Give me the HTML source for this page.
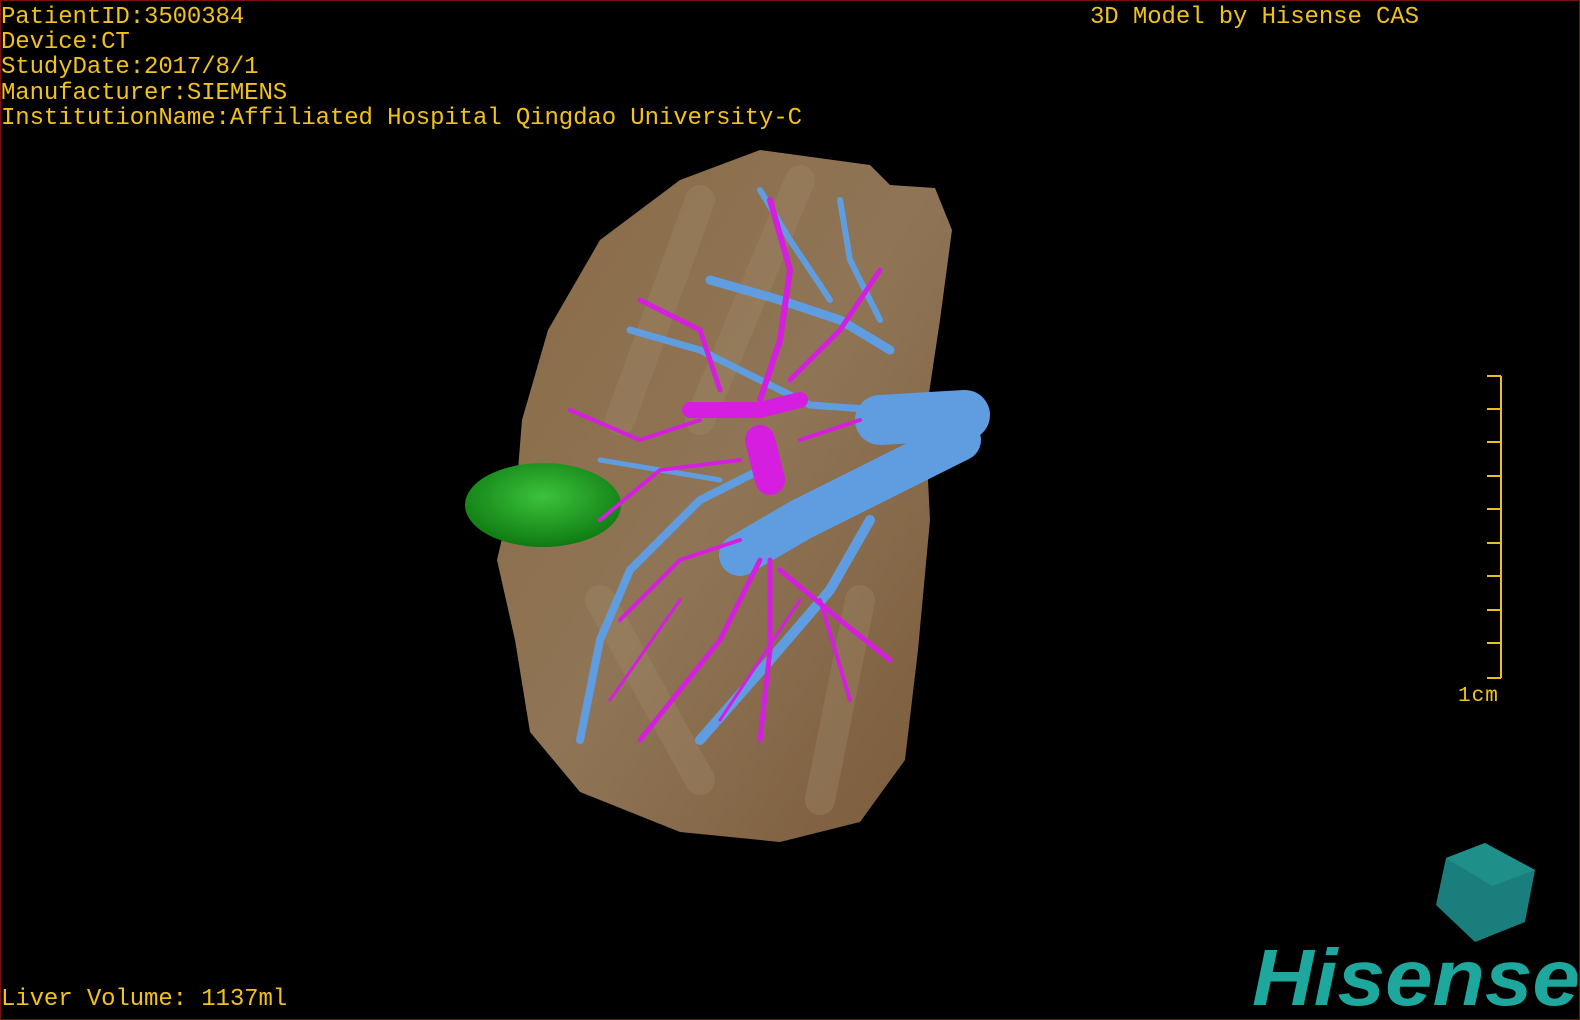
<!DOCTYPE html>
<html><head><meta charset="utf-8"><style>
html,body{margin:0;padding:0;background:#000;}
body{width:1580px;height:1020px;position:relative;overflow:hidden;}
.frame{position:absolute;left:0;top:0;width:1578px;height:1018px;border:1px solid #7a1010;}
.t{position:absolute;color:#f2c21a;font-family:"Liberation Mono","DejaVu Sans Mono",monospace;font-size:24px;line-height:25.2px;white-space:pre;letter-spacing:-0.1px;}
svg{position:absolute;left:0;top:0;}
</style></head><body>
<svg width="1580" height="1020" viewBox="0 0 1580 1020">
<defs>
<linearGradient id="lv" x1="0" y1="0" x2="1" y2="1">
<stop offset="0" stop-color="#8a6a45"/><stop offset="0.5" stop-color="#8f7556"/><stop offset="1" stop-color="#7a5a3a"/>
</linearGradient>
<radialGradient id="gr" cx="0.5" cy="0.4" r="0.6"><stop offset="0" stop-color="#3cc33c"/><stop offset="1" stop-color="#0f7a12"/></radialGradient>
</defs>
<path d="M760,150 L870,165 L890,185 L935,188 L952,230 L940,320 L925,420 L930,520 L918,650 L905,760 L860,822 L780,842 L680,832 L580,792 L530,732 L515,640 L497,560 L518,470 L522,420 L548,330 L600,240 L680,180 Z" fill="url(#lv)"/>
<g stroke="#a08a6a" stroke-width="30" opacity="0.35" fill="none" stroke-linecap="round">
<path d="M700,200 L620,420"/><path d="M800,180 L700,420"/><path d="M600,600 L700,780"/><path d="M860,600 L820,800"/>
</g>
<ellipse cx="543" cy="505" rx="78" ry="42" fill="url(#gr)"/>
<g stroke="#5f9de0" fill="none" stroke-linecap="round">
<path d="M580,740 L600,640 L630,570 L700,500 L760,470" stroke-width="8"/>
<path d="M700,740 L770,660 L830,590 L870,520" stroke-width="10"/>
<path d="M710,280 L780,300 L840,320 L890,350" stroke-width="9"/>
<path d="M760,190 L790,240 L830,300" stroke-width="6"/>
<path d="M840,200 L850,260 L880,320" stroke-width="6"/>
<path d="M630,330 L700,350 L760,380 L810,405 L880,410" stroke-width="7"/>
<path d="M600,460 L660,470 L720,480" stroke-width="5"/>
<path d="M740,555 L800,520 L880,480 L960,440" stroke-width="42"/>
<path d="M880,420 L965,415" stroke-width="50"/>
</g>
<g stroke="#d51ee0" fill="none" stroke-linecap="round">
<path d="M760,440 L770,480" stroke-width="30"/>
<path d="M690,410 L760,410 L800,400" stroke-width="16"/>
<path d="M720,390 L700,330 L640,300" stroke-width="5"/>
<path d="M760,400 L780,340 L790,270 L770,200" stroke-width="6"/>
<path d="M790,380 L840,330 L880,270" stroke-width="5"/>
<path d="M700,420 L640,440 L570,410" stroke-width="4"/>
<path d="M740,460 L660,470 L600,520" stroke-width="4"/>
<path d="M760,560 L720,640 L640,740" stroke-width="5"/>
<path d="M770,560 L770,650 L760,740" stroke-width="5"/>
<path d="M780,570 L840,620 L890,660" stroke-width="5"/>
<path d="M740,540 L680,560 L620,620" stroke-width="4"/>
<path d="M820,600 L850,700" stroke-width="4"/>
<path d="M800,600 L720,720" stroke-width="3"/>
<path d="M680,600 L610,700" stroke-width="3"/>
<path d="M800,440 L860,420" stroke-width="4"/>
</g>
<g stroke="#e8c020" stroke-width="2" fill="none">
<path d="M1501,376 V678"/>
<path d="M1487,376 H1501 M1487,409 H1501 M1487,442 H1501 M1487,476 H1501 M1487,509 H1501 M1487,543 H1501 M1487,576 H1501 M1487,610 H1501 M1487,643 H1501 M1487,678 H1501"/>
</g>
<path d="M1485,843 L1535,870 L1525,922 L1475,942 L1436,905 L1446,858 Z" fill="#1a7f7c"/>
<path d="M1446,858 L1485,843 L1535,870 L1492,886 Z" fill="#1f8f8a"/>
<text x="1252" y="1005" font-family="Liberation Sans,sans-serif" font-weight="bold" font-style="italic" font-size="80" fill="#1ea79c" textLength="328" lengthAdjust="spacingAndGlyphs">Hisense</text>
</svg>
<div class="frame"></div>
<div class="t" style="left:1px;top:5px">PatientID:3500384
Device:CT
StudyDate:2017/8/1
Manufacturer:SIEMENS
InstitutionName:Affiliated Hospital Qingdao University-C</div>
<div class="t" style="left:1090px;top:5px">3D Model by Hisense CAS</div>
<div class="t" style="left:1458px;top:684px;font-size:21px;letter-spacing:1px">1cm</div>
<div class="t" style="left:1px;top:987px">Liver Volume: 1137ml</div>
</body></html>
